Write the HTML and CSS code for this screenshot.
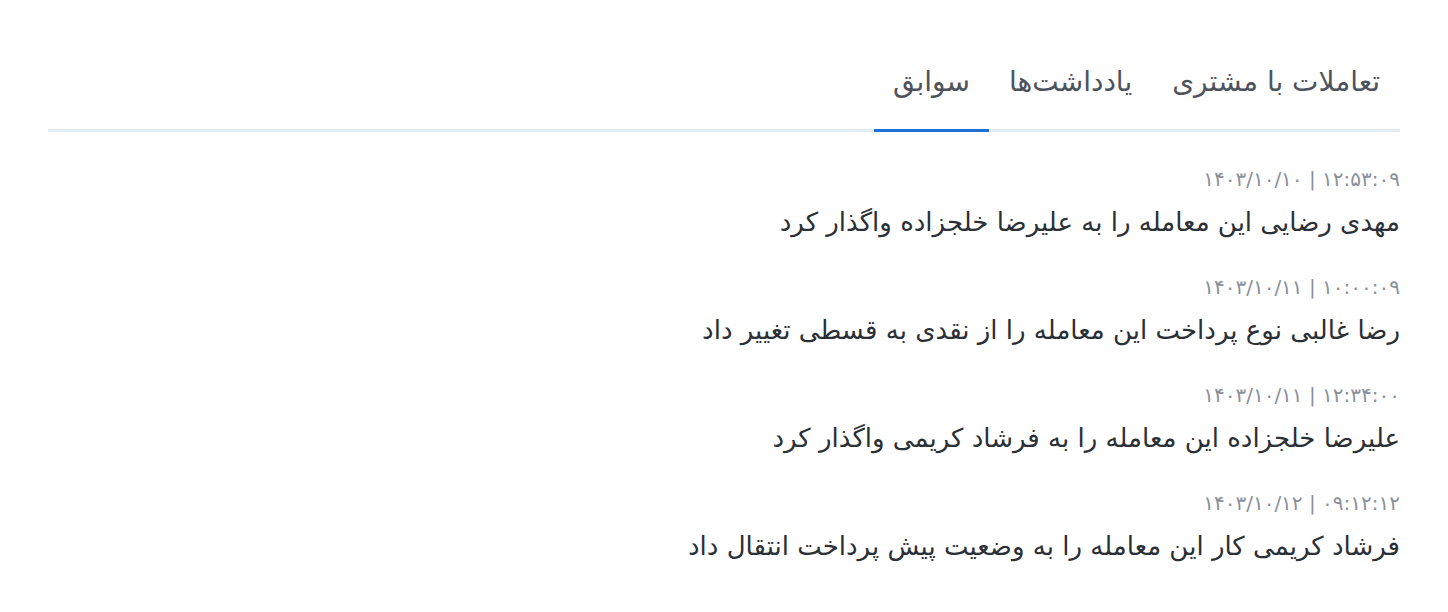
FILE: index.html
```html
<!DOCTYPE html>
<html lang="fa" dir="rtl">
<head>
<meta charset="UTF-8">
<title>سوابق</title>
<link rel="stylesheet" href="styles.css">
</head>
<body>
	<div class="panel">
		<ul class="tabs">
			<li>تعاملات با مشتری</li>
			<li>یادداشت‌ها</li>
			<li class="active">سوابق</li>
		</ul>
		<ul class="history">
			<li>
				<div class="time">۱۲:۵۳:۰۹ | ۱۴۰۳/۱۰/۱۰</div>
				<div class="desc">مهدی رضایی این معامله را به علیرضا خلجزاده واگذار کرد</div>
			</li>
			<li>
				<div class="time">۱۰:۰۰:۰۹ | ۱۴۰۳/۱۰/۱۱</div>
				<div class="desc">رضا غالبی نوع پرداخت این معامله را از نقدی به قسطی تغییر داد</div>
			</li>
			<li>
				<div class="time">۱۲:۳۴:۰۰ | ۱۴۰۳/۱۰/۱۱</div>
				<div class="desc">علیرضا خلجزاده این معامله را به فرشاد کریمی واگذار کرد</div>
			</li>
			<li>
				<div class="time">۰۹:۱۲:۱۲ | ۱۴۰۳/۱۰/۱۲</div>
				<div class="desc">فرشاد کریمی کار این معامله را به وضعیت پیش پرداخت انتقال داد</div>
			</li>
		</ul>
	</div>
</body>
</html>
```
FILE: styles.css
```css
body {
	margin: 0;
	background-color: #fff;
	font-family: "DejaVu Sans", sans-serif;
	color: #2b2f36;
}
ul {
	margin: 0;
	padding: 0;
	list-style: none;
}
.panel {
	padding: 52px 48px 0;
}
.tabs {
	display: flex;
	border-bottom: 3px solid #e3eaf4;
}
.tabs li {
	padding: 0 20px;
	height: 77px;
	line-height: 60px;
	font-size: 28px;
	color: #4d535c;
	margin-bottom: -3px;
	border-bottom: 3px solid transparent;
}
.tabs li.active {
	padding: 0 19px;
	border-bottom-color: #1f6fd5;
}
.history {
	padding-top: 32px;
}
.history li {
	height: 108px;
}
.time {
	font-size: 20px;
	line-height: 30px;
	color: #8a909a;
}
.desc {
	margin-top: 11px;
	font-size: 26px;
	line-height: 34px;
	color: #2b2f36;
}
```
